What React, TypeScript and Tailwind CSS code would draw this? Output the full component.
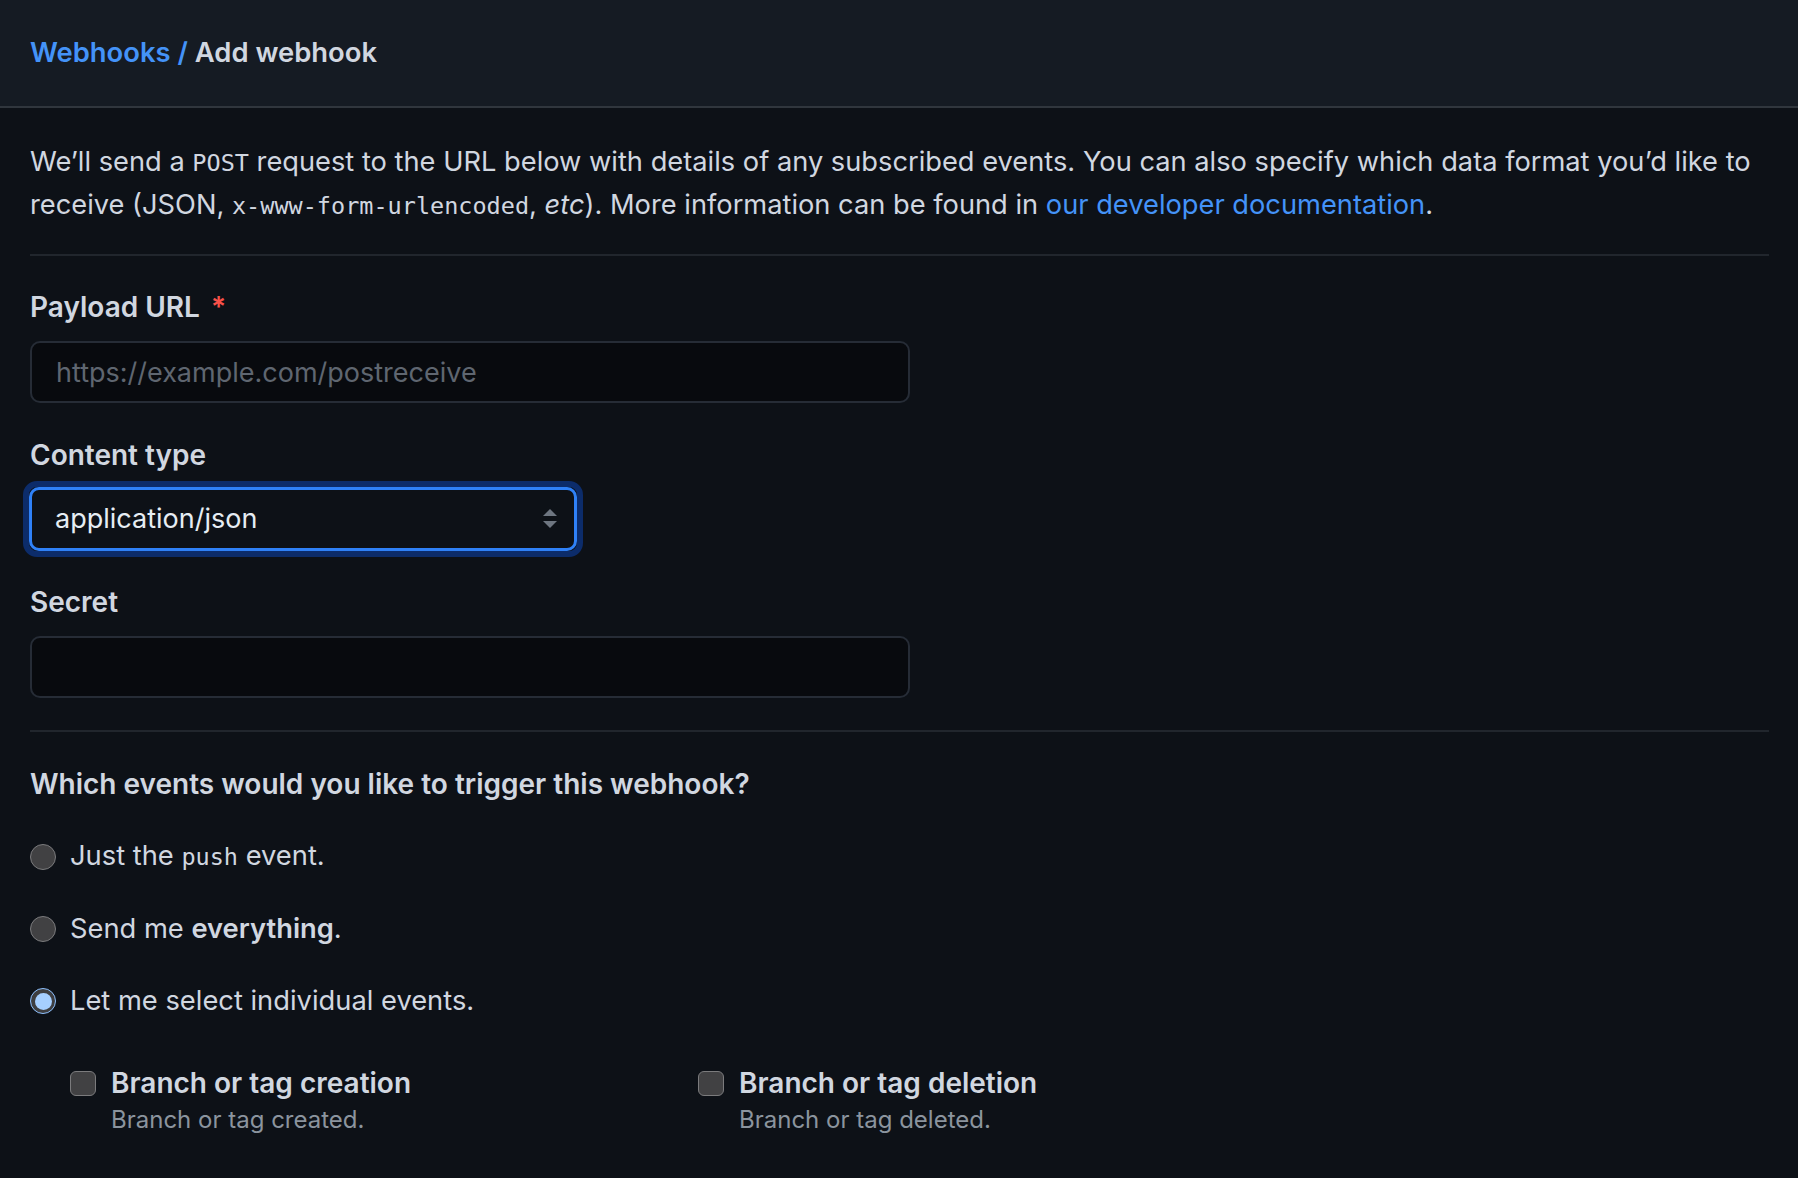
const sans = "font-['Inter','Noto_Sans',sans-serif]";
const mono = "font-['DejaVu_Sans_Mono','Liberation_Mono',monospace]";

type EventOption = {
  id: string;
  title: string;
  description: string;
};

const events: EventOption[] = [
  { id: 'create', title: 'Branch or tag creation', description: 'Branch or tag created.' },
  { id: 'delete', title: 'Branch or tag deletion', description: 'Branch or tag deleted.' }
];

function Radio({ checked }: { checked?: boolean }) {
  if (checked) {
    return (
      <span className="flex h-[26px] w-[26px] shrink-0 items-center justify-center rounded-full border-[1.5px] border-[#8ec1ff] bg-[#3e3e40]">
        <span className="h-[17px] w-[17px] rounded-full bg-[#a6cfff]" />
      </span>
    );
  }
  return (
    <span className="h-[26px] w-[26px] shrink-0 rounded-full border-[1.5px] border-[#7b7b7d] bg-[#414143]" />
  );
}

export default function App() {
  return (
    <div className={`min-h-screen bg-[#0d1117] text-[#d1d7e0] ${sans}`}>
      {/* Subhead */}
      <header className="flex h-[108px] items-center border-b-2 border-[#30363d] bg-[#151b23] px-[30px]">
        <h1 className="text-[27.4px] font-semibold">
          <a href="#" className="text-[#4493f8]">
            Webhooks
          </a>
          <span className="text-[#4493f8]"> / </span>
          <span className="text-[#d1d7e0]">Add webhook</span>
        </h1>
      </header>

      <main className="pl-[30px] pr-[29px]">
        <p className="pt-[33px] text-[27.25px] leading-[42px]">
          We’ll send a <code className={`${mono} text-[23.5px]`}>POST</code> request to the URL below with
          details of any subscribed events. You can also specify which data format you’d like to receive
          (JSON, <code className={`${mono} text-[23.5px]`}>x-www-form-urlencoded</code>, <em>etc</em>). More
          information can be found in{' '}
          <a href="#" className="text-[#4493f8]">
            our developer documentation
          </a>
          .
        </p>

        <hr className="mt-[27px] border-t-2 border-[#21262d]" />

        <form className="flex flex-col">
          <label className="mt-[33px] text-[28px] font-semibold leading-[36px]">
            Payload URL <span className="ml-1 text-[#f85149]">*</span>
          </label>
          <input
            type="text"
            placeholder="https://example.com/postreceive"
            className="mt-[16px] h-[62px] w-[880px] rounded-[10px] border-2 border-[#262c36] bg-[#080a0e] px-[24px] text-[27px] text-[#d1d7e0] outline-none placeholder:text-[#5f6670]"
          />

          <label className="mt-[34px] text-[28px] font-semibold leading-[36px]">Content type</label>
          <div className="-ml-[7px] mt-[8px] w-[560px] rounded-[14px] border-[6px] border-[#0c2c6a]">
            <div className="flex h-[64px] items-center justify-between rounded-[10px] border-[3px] border-[#2f81f7] bg-[#0d1117] pl-[23px] pr-[17px]">
              <span className="text-[27px] text-[#e6edf3]">application/json</span>
              <svg width="14" height="20" viewBox="0 0 14 20" aria-hidden="true">
                <path d="M7 0 L14 7 L0 7 Z" fill="#6e7681" />
                <path d="M0 12 L14 12 L7 19 Z" fill="#6e7681" />
              </svg>
            </div>
          </div>

          <label className="mt-[27px] text-[28px] font-semibold leading-[36px]">Secret</label>
          <input
            type="password"
            className="mt-[16px] h-[62px] w-[880px] rounded-[10px] border-2 border-[#262c36] bg-[#080a0e] px-[24px] text-[27px] text-[#d1d7e0] outline-none"
          />
        </form>

        <hr className="mt-[32px] border-t-2 border-[#21262d]" />

        <h2 className="mt-[34px] text-[28px] font-semibold leading-[36px]">
          Which events would you like to trigger this webhook?
        </h2>

        <div className="mt-[36px] flex flex-col gap-[36px] text-[27.3px] leading-[36px]">
          <label className="flex items-center gap-[14px]">
            <Radio />
            <span>
              Just the <code className={`${mono} text-[23.5px]`}>push</code> event.
            </span>
          </label>
          <label className="flex items-center gap-[14px]">
            <Radio />
            <span>
              Send me <strong className="font-semibold">everything</strong>.
            </span>
          </label>
          <label className="flex items-center gap-[14px]">
            <Radio checked />
            <span>Let me select individual events.</span>
          </label>
        </div>

        <div className="mt-[46px] grid w-[1100px] grid-cols-[628px_1fr] pl-[40px]">
          {events.map((ev) => (
            <div key={ev.id} className="flex gap-[15px]">
              <span className="mt-[6px] h-[25px] w-[26px] shrink-0 rounded-[6px] border-[1.5px] border-[#7b7b7d] bg-[#414143]" />
              <div className="flex flex-col">
                <span className="text-[28px] font-semibold leading-[36px]">{ev.title}</span>
                <span className="text-[24px] leading-[38px] text-[#8b949e]">{ev.description}</span>
              </div>
            </div>
          ))}
        </div>
      </main>
    </div>
  );
}
